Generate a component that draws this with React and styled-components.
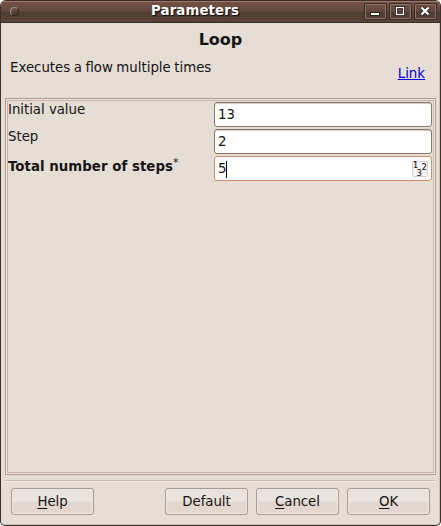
import React from "react";
import styled, { createGlobalStyle, css } from "styled-components";

const Global = createGlobalStyle`
  * { box-sizing: border-box; }
  body { margin: 0; background: #fff; overflow: hidden; }
`;

const Window = styled.div`
  width: 441px;
  height: 526px;
  display: flex;
  flex-direction: column;
  background: #e6ddd5;
  border: 1px solid #3d302b;
  border-top: 0;
  border-radius: 6px 6px 5px 5px;
  box-shadow: inset -1px -1px 0 #cdbfb4;
  overflow: hidden;
  color: #141414;
  font: 13.33px/16px "DejaVu Sans", sans-serif;
`;

const TitleBar = styled.header`
  height: 23px;
  flex: none;
  display: grid;
  grid-template-columns: 25px 1fr 76px;
  background: linear-gradient(#755245 0, #64493e 10px, #513d34 11px, #594338 21px);
  border-top: 1px solid #3d2c26;
  border-bottom: 1px solid #382a24;
  box-shadow: inset 0 1px 0 #97786b;
`;

const MenuDot = styled.i`
  width: 9px;
  height: 9px;
  margin: 6px 0 0 9px;
  border: 1px solid;
  border-color: #a8958d #2e211c #2e211c #a8958d;
  border-radius: 50%;
`;

const Title = styled.h1`
  margin: 2px 0 0;
  font-size: 13.33px;
  line-height: 16px;
  letter-spacing: 0.12px;
  text-align: center;
  white-space: nowrap;
  color: #fff;
  text-shadow: 1px 1px 1px #1d130f, 1px 1px 1px #1d130f;
`;

const Controls = styled.div`
  display: flex;
  gap: 2px;
  padding-top: 2px;
`;

const Control = styled.button`
  width: 23px;
  height: 17px;
  padding: 0;
  border: 1px solid #392a25;
  border-radius: 2px;
  background: transparent;
  box-shadow: inset 0 0 0 1px #8a746b;
  svg { display: block; }
`;

const Heading = styled.h2`
  margin: 7px 0 0;
  font-size: 16px;
  line-height: 20px;
  text-align: center;
`;

const Intro = styled.div`
  height: 48px;
  flex: none;
  display: flex;
  justify-content: space-between;
  padding: 10px 15px 0 9px;
`;

const Description = styled.span`
  word-spacing: -0.75px;
`;

const Link = styled.a`
  margin-top: 6px;
  color: #0000ee;
  text-decoration: underline;
`;

const Panel = styled.main`
  width: 431px;
  height: 377px;
  flex: none;
  margin-left: 4px;
  border: 1px solid #b09c8e;
  box-shadow: inset 0 0 0 1px #f0e6df, inset 0 0 0 2px #c6b4a8;
  padding: 3px 2px;
`;

const Row = styled.label`
  display: grid;
  grid-template-columns: 206px 218px;
  height: 27px;
`;

const Label = styled.span`
  padding-top: ${(p) => (p.$required ? "3px" : "0")};
  font-weight: ${(p) => (p.$required ? "bold" : "normal")};
  letter-spacing: ${(p) => (p.$required ? "0.04px" : "-0.03px")};
  white-space: nowrap;
  sup { font-size: 11px; font-weight: normal; line-height: 0; vertical-align: 5px; }
`;

const Field = styled.span`
  height: 25px;
  display: flex;
  align-items: center;
  padding: 1px 3px 0;
  background: #fff;
  border: 1px solid ${(p) => (p.$focused ? "#d38b6c" : "#87766a")};
  border-radius: 3px;
  ${(p) => !p.$focused && css`box-shadow: inset 0 1px 0 #d5cdc8;`}
`;

const Caret = styled.i`
  width: 1px;
  height: 17px;
  background: #000;
`;

const NumberIcon = styled.svg`
  margin: -1px 0 0 auto;
`;

const Footer = styled.footer`
  width: 431px;
  margin: 5px 0 0 4px;
  border-top: 1px solid #cbbaad;
  box-shadow: inset 0 1px 0 #f3ece6;
  display: flex;
  gap: 8px;
  padding: 7px 6px 0 6px;
`;

const Button = styled.button`
  width: 83px;
  height: 27px;
  padding: 0;
  border: 1px solid #a99b91;
  border-radius: 3px;
  background: linear-gradient(#eae1dc 0, #ebe4df 12px, #e2d7cf 13px, #e3d6ce 100%);
  box-shadow: inset 0 0 0 1px #efe7e2;
  color: #141414;
  font: inherit;
  letter-spacing: -0.05px;
  margin-right: ${(p) => (p.$pushed ? "auto" : "0")};
  u { text-underline-offset: 2px; }
`;

function Digits() {
  return (
    <NumberIcon width="16" height="16" fontFamily="DejaVu Sans" fontSize="8" fill="#222">
      <rect x=".5" y=".5" width="15" height="15" rx="1" fill="#f5f4f3" stroke="#d4d2d0" />
      <g stroke="#222" strokeWidth=".2">
        <text x="1" y="7">1</text>
        <text x="9.8" y="9">2</text>
        <text x="4.7" y="14.5">3</text>
      </g>
    </NumberIcon>
  );
}

const fields = [
  { label: "Initial value", value: "13" },
  { label: "Step", value: "2" },
  { label: "Total number of steps", value: "5", required: true },
];

export default function App() {
  return (
    <>
      <Global />
      <Window>
        <TitleBar>
          <MenuDot />
          <Title>Parameters</Title>
          <Controls>
            <Control aria-label="Minimize">
              <svg width="21" height="15"><rect x="5" y="8" width="10" height="4" fill="#2f231e" /><rect x="6" y="9" width="8" height="2" fill="#fff" /></svg>
            </Control>
            <Control aria-label="Maximize">
              <svg width="21" height="15" fill="none"><rect x="6.5" y="3.5" width="7" height="7" stroke="#2f231e" strokeWidth="3" /><rect x="6.5" y="3.5" width="7" height="7" stroke="#fff" strokeWidth="1.2" /></svg>
            </Control>
            <Control aria-label="Close">
              <svg width="21" height="15" fill="none"><path d="M6.5 3.5l7 7m0-7l-7 7" stroke="#2f231e" strokeWidth="4.5" /><path d="M6.5 3.5l7 7m0-7l-7 7" stroke="#fff" strokeWidth="2.4" /></svg>
            </Control>
          </Controls>
        </TitleBar>
        <Heading>Loop</Heading>
        <Intro>
          <Description>Executes a flow multiple times</Description>
          <Link href="#">Link</Link>
        </Intro>
        <Panel>
          {fields.map(({ label, value, required }) => (
            <Row key={label}>
              <Label $required={required}>{label}{required && <sup>*</sup>}</Label>
              <Field $focused={required}>
                {value}
                {required && <><Caret /><Digits /></>}
              </Field>
            </Row>
          ))}
        </Panel>
        <Footer>
          <Button $pushed><u>H</u>elp</Button>
          <Button>Default</Button>
          <Button><u>C</u>ancel</Button>
          <Button><u>O</u>K</Button>
        </Footer>
      </Window>
    </>
  );
}
